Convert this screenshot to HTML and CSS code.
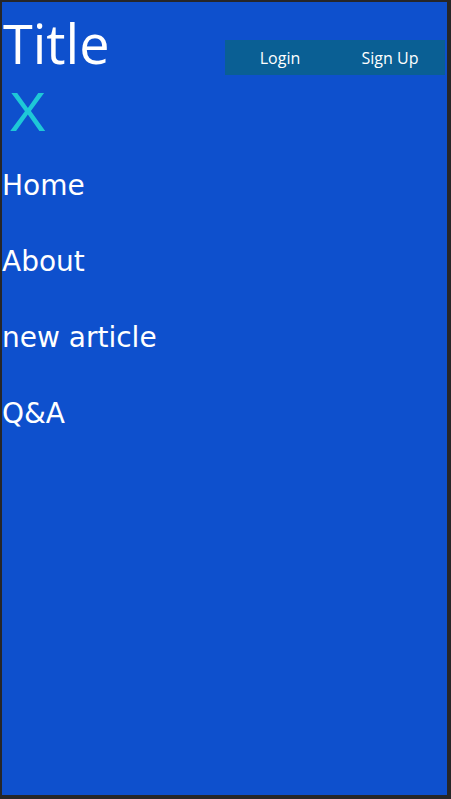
FILE: index.html
```html
<!DOCTYPE html>
<html lang="en">
<head>
    <meta charset="UTF-8">
    <meta name="viewport" content="width=device-width, initial-scale=1.0">
    <title>Title</title>
    <link rel="stylesheet" href="styles.css">
</head>
<body>
    <div class="page">
        <header class="top-bar">
            <div class="brand">
                <h1 class="site-title">Title</h1>
                <button class="close-btn" type="button">X</button>
            </div>
            <div class="auth">
                <a class="auth-link" href="#">Login</a>
                <a class="auth-link" href="#">Sign Up</a>
            </div>
        </header>
        <nav class="side-nav">
            <a href="#">Home</a>
            <a href="#">About</a>
            <a href="#">new article</a>
            <a href="#">Q&amp;A</a>
        </nav>
    </div>
</body>
</html>
```

FILE: styles.css
```css
html, body {
    margin: 0;
    padding: 0;
    height: 100%;
    background-color: #262628;
}
.page {
    box-sizing: border-box;
    height: 100%;
    border: 2px solid #262628;
    border-right-width: 4px;
    border-bottom-width: 4px;
    background-color: #0e50cd;
    font-family: "Open Sans", sans-serif;
    color: #fff;
}
.top-bar {
    display: flex;
    justify-content: space-between;
    align-items: flex-start;
}
.brand {
    display: flex;
    flex-direction: column;
    align-items: flex-start;
}
.site-title {
    margin: 6px 0 0 0;
    padding-left: 1px;
    font-size: 54px;
    font-weight: normal;
    line-height: 70px;
}
.close-btn {
    margin: 6px 0 0 7px;
    padding: 0;
    border: none;
    background: none;
    color: #1ec8d7;
    font-family: "Liberation Sans", sans-serif;
    font-size: 56px;
    line-height: 56px;
    cursor: pointer;
}
.auth {
    display: flex;
    margin: 38px 2px 0 0;
    background-color: #0a5f94;
}
.auth-link {
    width: 110px;
    height: 35px;
    display: flex;
    align-items: center;
    justify-content: center;
    color: #fff;
    text-decoration: none;
    font-size: 16px;
}
.side-nav {
    display: flex;
    flex-direction: column;
    margin-top: 8px;
}
.side-nav a {
    font-family: "DejaVu Sans", sans-serif;
    font-size: 28px;
    line-height: 76px;
    color: #fff;
    text-decoration: none;
}
```
